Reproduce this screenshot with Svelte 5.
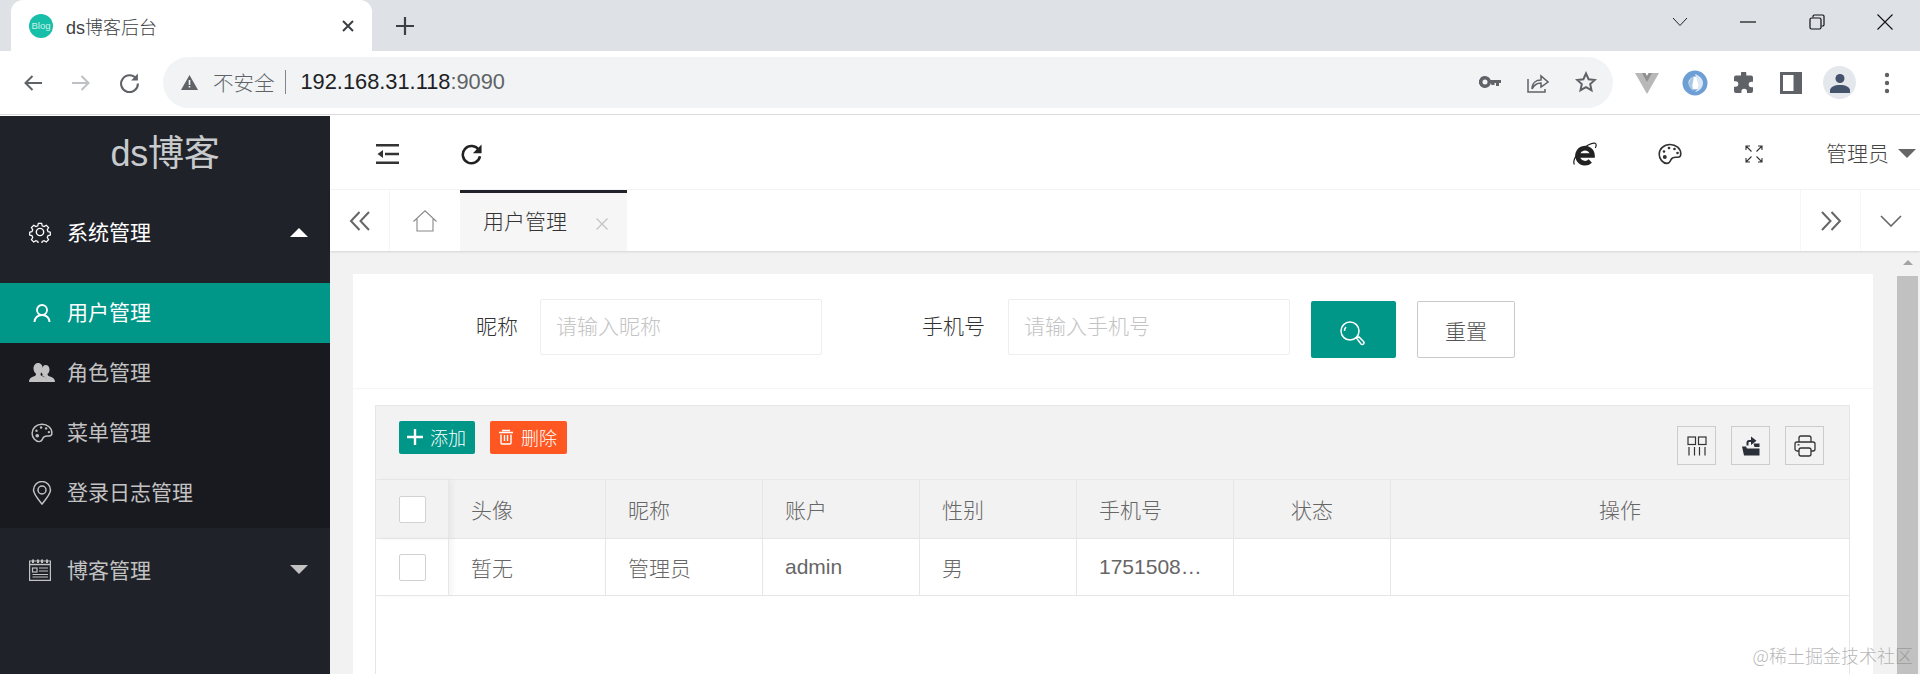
<script lang="ts">
	const subMenu = [
		{ label: '用户管理', icon: 'user', active: true },
		{ label: '角色管理', icon: 'users', active: false },
		{ label: '菜单管理', icon: 'palette', active: false },
		{ label: '登录日志管理', icon: 'pin', active: false }
	];
	const columns = ['头像', '昵称', '账户', '性别', '手机号', '状态', '操作'];
	const row = ['暂无', '管理员', 'admin', '男', '1751508…', '', ''];
</script>

{#snippet palette(size)}
	<svg width={size} height={size} viewBox="0 0 24 24" fill="none" stroke="currentColor" stroke-width="1.6">
		<path d="M12 2.500C5.800 2.500 1.200 6.800 1.200 12.200c0 4.900 3.800 9.200 7.600 9.200 3 0 3.400-2 4.200-3.800.9-2 2.400-2.300 4.600-2.300h2.200c2 0 3-1.300 3-3.300C22.800 6.600 18 2.500 12 2.500z" />
		<g fill="currentColor" stroke="none">
			<circle cx="6" cy="9.500" r="1.300" /><circle cx="11" cy="6" r="1.300" /><circle cx="16.500" cy="7" r="1.300" /><circle cx="19.500" cy="11" r="1.300" /><circle cx="6.800" cy="15" r="2" />
		</g>
	</svg>
{/snippet}

{#snippet caret(up, color)}
	<span class="caret" class:up style="--c:{color}"></span>
{/snippet}

<div class="browser">
	<div class="tabstrip">
		<div class="tab">
			<span class="favicon">Blog</span>
			<span class="tab-title">ds博客后台</span>
			<svg class="tab-close" width="14" height="14" viewBox="0 0 14 14" stroke="#3c4043" stroke-width="2"><path d="M2 2l10 10M12 2L2 12" /></svg>
		</div>
		<svg class="new-tab" width="18" height="18" viewBox="0 0 18 18" stroke="#3c4043" stroke-width="2.200"><path d="M9 0v18M0 9h18" /></svg>
		<div class="win-controls">
			<svg width="16" height="10" viewBox="0 0 16 10" fill="none" stroke="#222"><path d="M1 1l7 7.500L15 1" /></svg>
			<svg width="16" height="4" viewBox="0 0 16 4" stroke="#111" stroke-width="1.200"><path d="M0 2h16" /></svg>
			<svg width="16" height="16" viewBox="0 0 16 16" fill="none" stroke="#111" stroke-width="1.200"><rect x="1" y="4" width="11" height="11" rx="1.500" /><path d="M4 3.500V2.300C4 1.500 4.500 1 5.300 1h8.400C14.500 1 15 1.500 15 2.300v8.400c0 .8-.5 1.300-1.300 1.300h-1.200" /></svg>
			<svg width="16" height="16" viewBox="0 0 16 16" stroke="#111" stroke-width="1.100"><path d="M.5.500l15 15M15.500.500l-15 15" /></svg>
		</div>
	</div>
	<div class="toolbar">
		<div class="nav-btns">
			<svg width="20" height="18" viewBox="0 0 20 18" fill="none" stroke="#5f6368" stroke-width="2"><path d="M19 9H3M9.500 2L2.500 9l7 7" /></svg>
			<svg width="20" height="18" viewBox="0 0 20 18" fill="none" stroke="#bdc1c6" stroke-width="2"><path d="M1 9h16M10.500 2l7 7-7 7" /></svg>
			<svg width="21" height="21" viewBox="0 0 20 20" fill="none" stroke="#5f6368" stroke-width="2"><path d="M16.500 6.500A8 8 0 1 0 18 11" /><path d="M18 1.500V8h-6.500z" fill="#5f6368" stroke="none" /></svg>
		</div>
		<div class="omnibox">
			<svg width="17" height="15" viewBox="0 0 17 15"><path d="M8.500 0L17 15H0z" fill="#5f6368" /><path d="M7.700 5h1.600v5H7.700zM7.700 11h1.600v1.600H7.700z" fill="#f1f3f4" /></svg>
			<span class="insecure">不安全</span>
			<span class="sep"></span>
			<span class="url">192.168.31.118<span class="port">:9090</span></span>
			<span class="omni-icons">
				<svg width="22" height="12" viewBox="0 0 22 12" fill="#5f6368"><path d="M6 0a6 6 0 1 1-5.700 8H0V4h.3A6 6 0 0 1 6 0zm0 3.500a2.500 2.500 0 1 0 0 5 2.500 2.500 0 0 0 0-5zM11 4h11v3h-2v3h-3V7h-1.500v2h-3z" /></svg>
				<svg width="22" height="22" viewBox="0 0 22 22" fill="none" stroke="#5f6368" stroke-width="1.500"><path d="M1 8v13h17v-3" /><path d="M5 18c0-6 4-9 9-9V5l7 6-7 5v-4c-4 0-7 2-9 6z" /></svg>
				<svg width="22" height="22" viewBox="0 0 22 22" fill="none" stroke="#5f6368" stroke-width="2"><path d="M11 2.500l2.600 5.700 6.200.7-4.600 4.200 1.300 6.100-5.500-3.100-5.500 3.100 1.300-6.100-4.600-4.200 6.200-.7z" /></svg>
			</span>
		</div>
		<div class="ext-icons">
			<svg width="24" height="22" viewBox="0 0 24 22"><path d="M0 1h7.500L12 9l4.500-8H24L12 22z" fill="#b8b8b8" /><path d="M7 1h3.500L12 4l1.500-3H17l-5 9z" fill="#8f8f8f" /></svg>
			<svg class="ext-blue" width="26" height="26" viewBox="0 0 26 26" fill="none"><circle cx="13" cy="13" r="9.500" stroke="#6e9fd4" stroke-width="6" /><path d="M13 4c5 2 8 5 8 9s-3 8-8 9c3-3 4-6 3-9s-2-6-3-9z" fill="#dbe8f5" /><path d="M12 6c-4 2-5 5-5 8 0 3 2 6 5 7-2-3-2-6-1-9z" fill="#a9c8e6" /></svg>
			<svg width="22" height="22" viewBox="0 0 22 22" fill="#5f6368"><path d="M8 1a2.700 2.700 0 0 1 5.300 0v2.500H18a2 2 0 0 1 2 2v4.200h-1.500a2.800 2.800 0 1 0 0 5.600H20V19a2 2 0 0 1-2 2h-4v-1.500a2.800 2.800 0 1 0-5.600 0V21H3a2 2 0 0 1-2-2v-4.200h1.500a2.800 2.800 0 1 0 0-5.600H1V5.500a2 2 0 0 1 2-2h5z" /></svg>
			<svg width="22" height="22" viewBox="0 0 22 22"><rect width="22" height="22" fill="#5f6368" /><rect x="3" y="3" width="10.500" height="16" fill="#fff" /></svg>
			<span class="avatar">
				<svg width="20" height="20" viewBox="0 0 20 20" fill="#45526c"><circle cx="10" cy="5.500" r="4.500" /><path d="M0 20v-2.500C0 14 4.500 12 10 12s10 2 10 5.500V20z" /></svg>
			</span>
			<svg class="kebab" width="6" height="22" viewBox="0 0 6 22" fill="#5f6368"><circle cx="3" cy="3" r="2.200" /><circle cx="3" cy="11" r="2.200" /><circle cx="3" cy="19" r="2.200" /></svg>
		</div>
	</div>

	<div class="app">
		<aside class="sidebar">
			<div class="logo">ds博客</div>
			<div class="menu-head open">
				<svg class="menu-icon" width="22" height="22" viewBox="0 0 24 24" fill="none" stroke="currentColor" stroke-width="1.500"><circle cx="12" cy="12" r="4" /><path d="M10 1.500h4l.7 3 2.300 1 2.600-1.600 2.800 2.800-1.600 2.600 1 2.300 2.700.7v3.400l-2.700.7-1 2.300 1.600 2.600-2.800 2.800-2.600-1.600-2.300 1-.7 2.900h-4l-.7-2.900-2.300-1-2.600 1.600-2.800-2.800 1.600-2.600-1-2.300-2.700-.7v-3.400l2.700-.7 1-2.300-1.600-2.600 2.800-2.800 2.600 1.600 2.300-1z" transform="translate(1.200 1.200) scale(.9)" /></svg>
				<span>系统管理</span>
				{@render caret(true, '#fff')}
			</div>
			<ul class="sub">
				{#each subMenu as item}
					<li class:active={item.active}>
						<span class="menu-icon">
							{#if item.icon === 'user'}
								<svg width="20" height="20" viewBox="0 0 20 20" fill="none" stroke="currentColor" stroke-width="1.900"><circle cx="10" cy="7" r="5" /><path d="M2.500 19c0-4 3-7 7.500-7s7.500 3 7.500 7" /></svg>
							{:else if item.icon === 'users'}
								<svg width="26" height="22" viewBox="0 0 26 22" fill="currentColor"><path d="M16.500 3c2.500 0 4 2 4 4.500 0 2-.8 3.500-2 4.500 0 1.500 1 2 3 2.700 2.500.9 4.500 2 4.500 5.300h-8c0-3-1.500-5-5-6.500 1-.8.5-1.500-.5-3 0-.8.5-7.500 4-7.500z" /><path d="M9 1c3 0 4.800 2.500 4.800 5.500 0 2.300-.8 4-2.300 5.200 0 1.800 1 2.300 3.300 3.100 2.200.8 3.700 2.500 3.700 5.200H0c0-3 1.600-4.400 3.800-5.200 2.300-.8 3.200-1.300 3.200-3.100C5.500 10.500 4.500 8.800 4.500 6.500 4.500 3.500 6.200 1 9 1z" /></svg>
							{:else if item.icon === 'palette'}
								{@render palette(22)}
							{:else}
								<svg width="20" height="24" viewBox="0 0 20 24" fill="none" stroke="currentColor" stroke-width="1.500"><path d="M10 23C5 17 1.500 13 1.500 9a8.500 8.500 0 0 1 17 0c0 4-3.500 8-8.500 14z" /><circle cx="10" cy="9" r="4" /></svg>
							{/if}
						</span>
						<span class="sub-label">{item.label}</span>
					</li>
				{/each}
			</ul>
			<div class="menu-head">
				<svg class="menu-icon" width="22" height="22" viewBox="0 0 22 22" fill="none" stroke="currentColor" stroke-width="1.200"><path d="M.6 2h20.800v19.400H.6z" /><path d="M4 .5v3.500M9 .5v3.500M13 .5v3.500M18 .5v3.500" stroke-width="2" /><path d="M1 5.500h20" stroke-width="1.500" /><rect x="3.500" y="9" width="4.500" height="4" /><path d="M10 9h9M10 12h9M3.500 15.500H19M3.500 18H19" /></svg>
				<span>博客管理</span>
				{@render caret(false, '#c2c2c2')}
			</div>
		</aside>

		<main class="main">
			<header class="topbar">
				<div class="topbar-left">
					<svg width="23" height="20" viewBox="0 0 23 20" fill="#333"><path d="M0 0h23v2.600H0zM9 8.700h14v2.600H9zM0 17.400h23V20H0zM7 6v8l-5.500-4z" /></svg>
					<svg width="21" height="21" viewBox="0 0 23 23" fill="none" stroke="#222" stroke-width="2.800"><path d="M19.500 6.500a9.500 9.500 0 1 0 1.300 7" /><path d="M22.500 .5v9.500H13z" fill="#222" stroke="none" /></svg>
				</div>
				<div class="topbar-right">
					<svg width="24" height="24" viewBox="0 0 24 24" fill="none" stroke="#222"><path d="M1.500 22.500C-.5 20 2 14 6.500 9.500 12 4 19 .5 22 1.200c1.500.5 1.500 2.500.3 4.800" stroke-width="1.200" /><path d="M5 13.500h14.500a7.500 7.500 0 1 0-2.200 5.500" stroke-width="4.600" /></svg>
					<span class="palette-top">{@render palette(24)}</span>
					<svg class="full" width="18" height="18" viewBox="0 0 18 18" fill="none" stroke="#333" stroke-width="1.100"><path d="M6.500 6.500L1 1M1 5V1h4M11.500 6.500L17 1M13 1h4v4M6.500 11.500L1 17M1 13v4h4M11.500 11.500L17 17M13 17h4v-4" /></svg>
					<span class="admin"><span class="admin-name">管理员</span>{@render caret(false, '#666')}</span>
				</div>
			</header>
			<nav class="tabs">
				<span class="tabs-btn">
					<svg width="22" height="20" viewBox="0 0 22 20" fill="none" stroke="#666" stroke-width="2"><path d="M10.500 1L2 10l8.500 9M20 1l-8.500 9 8.500 9" /></svg>
				</span>
				<span class="tabs-btn home">
					<svg width="24" height="22" viewBox="0 0 24 22" fill="none" stroke="#888" stroke-width="1.100"><path d="M.5 11.500L12 .8l11.500 10.700M4 9v12h16V9" /></svg>
				</span>
				<span class="page-tab"><span class="page-tab-label">用户管理</span>
					<svg width="12" height="12" viewBox="0 0 12 12" stroke="#c2c2c2" stroke-width="1.200"><path d="M.5.500l11 11M11.500.500l-11 11" /></svg>
				</span>
				<span class="grow"></span>
				<span class="tabs-btn">
					<svg width="22" height="20" viewBox="0 0 22 20" fill="none" stroke="#666" stroke-width="2"><path d="M2 1l8.500 9L2 19M11.500 1L20 10l-8.500 9" /></svg>
				</span>
				<span class="tabs-btn down">
					<svg width="22" height="12" viewBox="0 0 22 12" fill="none" stroke="#666" stroke-width="1.600"><path d="M1 1l10 10L21 1" /></svg>
				</span>
			</nav>
			<div class="body">
				<div class="content">
					<section class="card">
						<form class="search" onsubmit={(e) => e.preventDefault()}>
							<label class="lb1" for="nick">昵称</label>
							<input id="nick" placeholder="请输入昵称" />
							<label class="lb2" for="phone">手机号</label>
							<input id="phone" placeholder="请输入手机号" />
							<button class="btn-search" type="submit" aria-label="搜索">
								<svg width="26" height="26" viewBox="0 0 26 26" fill="none" stroke="currentColor" stroke-width="1.500"><circle cx="11" cy="11" r="9" /><path d="M5.500 11a6 6 0 0 1 1.500-4" /><path d="M17.500 18l2.500-1 4.500 4.500a1.500 1.500 0 0 1-2.500 2.500z" /></svg>
							</button>
							<button class="btn-reset" type="button">重置</button>
						</form>
						<div class="table-box">
							<div class="table-tools">
								<button class="mini teal" type="button">
									<svg width="16" height="16" viewBox="0 0 16 16" fill="#fff"><path d="M6.800 0h2.400v6.800H16v2.400H9.200V16H6.800V9.200H0V6.800h6.800z" /></svg>添加
								</button>
								<button class="mini orange" type="button">
									<svg width="16" height="16" viewBox="0 0 16 16" fill="none" stroke="#fff" stroke-width="1.400"><path d="M1 3.500h14M4 1.500h8M3 5.500v8.500a1 1 0 0 0 1 1h8a1 1 0 0 0 1-1V5.500M6.500 6v6M9.500 6v6" /></svg>删除
								</button>
								<span class="grow"></span>
								<span class="tool">
									<svg width="20" height="20" viewBox="0 0 20 20" fill="none" stroke="#333" stroke-width="1.200"><rect x="1" y="1" width="7.500" height="7.500" /><rect x="11.500" y="1" width="7.500" height="7.500" /><path d="M2 11v8.500M7.500 11v8.500M12.500 11v8.500M18 11v8.500" /></svg>
								</span>
								<span class="tool">
									<svg width="20" height="20" viewBox="0 0 20 20" fill="#2b2f38"><path d="M5.500 9.500V6.500C5.500 5 6.500 4 8 4H10V0.500L15.500 4.800 10 9V6H8.500C8 6 7.500 6.400 7.500 7V9.500z" /><path d="M12.500 7.500H18.500V11H13.500z" /><path d="M1 10.500h4l1 2h12.500V19.500H3z" /></svg>
								</span>
								<span class="tool">
									<svg width="22" height="22" viewBox="0 0 22 22" fill="none" stroke="#333" stroke-width="1.300"><path d="M5 7V3a2 2 0 0 1 2-2h8a2 2 0 0 1 2 2v4" /><path d="M5 16H3a2 2 0 0 1-2-2V9a2 2 0 0 1 2-2h16a2 2 0 0 1 2 2v5a2 2 0 0 1-2 2h-2" /><rect x="5" y="13" width="12" height="8" rx="2" /><path d="M3.500 9.800h2" /></svg>
								</span>
							</div>
							<table>
								<thead>
									<tr>
										<th class="check"><span class="box"></span></th>
										{#each columns as col, i}
											<th class:center={i >= 5}>{col}</th>
										{/each}
									</tr>
								</thead>
								<tbody>
									<tr>
										<td class="check"><span class="box"></span></td>
										{#each row as cell}
											<td>{cell}</td>
										{/each}
									</tr>
								</tbody>
							</table>
						</div>
					</section>
				</div>
				<div class="scrollbar">
					<span class="scroll-up"></span>
					<span class="thumb"></span>
				</div>
			</div>
		</main>
	</div>
	<span class="watermark">@稀土掘金技术社区</span>
</div>

<style>
	:global(body) {
		margin: 0;
		overflow: hidden;
	}

	.browser {
		position: relative;
		width: 1920px;
		height: 674px;
		overflow: hidden;
		font-family: 'Liberation Sans', 'Noto Sans CJK SC', sans-serif;
		font-weight: 300;
		background: #fff;
		display: flex;
		flex-direction: column;
	}

	/* chrome */
	.tabstrip {
		height: 51px;
		flex-shrink: 0;
		background: #dee1e6;
		display: flex;
		align-items: center;
		padding-left: 11px;
	}
	.tab {
		width: 361px;
		height: 51px;
		box-sizing: border-box;
		background: #fff;
		border-radius: 12px 12px 0 0;
		display: flex;
		align-items: center;
		padding: 0 17px 0 18px;
		flex-shrink: 0;
	}
	.favicon {
		width: 24px;
		height: 24px;
		border-radius: 50%;
		background: #17bfa9;
		color: #cdf3ec;
		font-size: 9.5px;
		line-height: 24px;
		text-align: center;
		flex-shrink: 0;
	}
	.tab-title {
		margin-left: 13px;
		font-size: 18px;
		color: #3c4043;
		flex: 1;
	}
	.new-tab {
		margin-left: 24px;
	}
	.win-controls {
		margin-left: auto;
		width: 260px;
		display: flex;
		align-items: center;
		justify-content: space-between;
		padding: 0 27px 7px 12px;
		box-sizing: border-box;
	}
	.toolbar {
		height: 64px;
		flex-shrink: 0;
		box-sizing: border-box;
		background: #fff;
		border-bottom: 1px solid #dadce0;
		display: flex;
		align-items: center;
		padding-left: 23px;
	}
	.nav-btns {
		display: flex;
		align-items: center;
		gap: 28px;
		width: 140px;
		flex-shrink: 0;
	}
	.omnibox {
		width: 1450px;
		height: 51px;
		margin-top: -1px;
		box-sizing: border-box;
		background: #f1f3f4;
		border-radius: 26px;
		display: flex;
		align-items: center;
		padding: 0 16px 0 18px;
		flex-shrink: 0;
	}
	.insecure {
		margin-left: 15px;
		font-size: 20.5px;
		color: #5f6368;
	}
	.sep {
		width: 1px;
		height: 24px;
		background: #80868b;
		margin: 0 15px 0 10px;
	}
	.url {
		font-size: 21.8px;
		color: #202124;
		font-family: 'Liberation Sans', sans-serif;
	}
	.port {
		color: #5f6368;
	}
	.omni-icons {
		margin-left: auto;
		display: flex;
		align-items: center;
		gap: 26px;
	}
	.ext-icons {
		display: flex;
		align-items: center;
		margin-left: 22px;
		gap: 25px;
	}
	.ext-blue {
		margin-left: -2px;
	}
	.avatar {
		width: 33px;
		height: 33px;
		margin-left: -4px;
		border-radius: 50%;
		background: #e4e7eb;
		display: flex;
		align-items: center;
		justify-content: center;
	}
	.kebab {
		margin-left: 3px;
	}

	/* page */
	.app {
		flex: 1;
		display: flex;
		min-height: 0;
		margin-top: 1px;
	}
	.sidebar {
		width: 330px;
		flex-shrink: 0;
		background: #20222a;
		color: #c2c2c2;
		font-size: 21px;
		font-weight: 400;
	}
	.logo {
		height: 73px;
		line-height: 75px;
		text-align: center;
		font-size: 36px;
		color: #c8cacc;
		letter-spacing: -0.3px;
	}
	.menu-head {
		height: 83px;
		display: flex;
		align-items: center;
		padding: 0 22px 0 29px;
		box-sizing: border-box;
	}
	.menu-head span:not(.caret) {
		margin-top: -2px;
	}
	.menu-head.open {
		height: 94px;
		padding-bottom: 8px;
		color: #fff;
	}
	.menu-head .menu-icon {
		margin-right: 16px;
		flex-shrink: 0;
	}
	.caret {
		width: 0;
		height: 0;
		border-left: 9px solid transparent;
		border-right: 9px solid transparent;
		border-top: 9px solid var(--c);
		display: inline-block;
	}
	.caret.up {
		border-top: 0;
		border-bottom: 9px solid var(--c);
	}
	.menu-head .caret {
		margin-left: auto;
	}
	.sub {
		list-style: none;
		margin: 0;
		padding: 0 0 5px;
		background: #191a20;
	}
	.sub li {
		height: 60px;
		display: flex;
		align-items: center;
		padding-left: 29px;
	}
	.sub li.active {
		background: #009688;
		color: #fff;
	}
	.sub .menu-icon {
		width: 26px;
		margin-right: 12px;
		display: flex;
		justify-content: center;
	}
	.sub-label {
		margin-top: -4px;
	}
	.main {
		flex: 1;
		min-width: 0;
		display: flex;
		flex-direction: column;
	}
	.topbar {
		height: 74px;
		flex-shrink: 0;
		box-sizing: border-box;
		border-bottom: 1px solid #f6f6f6;
		display: flex;
		align-items: center;
		padding: 3px 4px 0 46px;
	}
	.topbar-left {
		display: flex;
		align-items: center;
		gap: 62px;
	}
	.topbar-right {
		margin-left: auto;
		display: flex;
		align-items: center;
	}
	.palette-top {
		margin-left: 61px;
		display: flex;
		color: #333;
	}
	.full {
		margin-left: 63px;
	}
	.admin {
		margin-left: 63px;
		font-size: 21px;
		color: #444;
		display: flex;
		align-items: center;
		gap: 9px;
	}
	.admin-name {
		margin-top: -5px;
	}
	.admin .caret {
		margin-top: -2px;
	}
	.tabs {
		height: 61px;
		flex-shrink: 0;
		box-sizing: border-box;
		display: flex;
		box-shadow: 0 1px 2px rgba(0, 0, 0, 0.12);
		position: relative;
		background: #fff;
	}
	.tabs-btn {
		width: 60px;
		display: flex;
		align-items: center;
		justify-content: center;
		border-right: 1px solid #f6f6f6;
		box-sizing: border-box;
	}
	.tabs-btn.home {
		width: 70px;
		border-right: 0;
	}
	.tabs-btn.down {
		border: 0;
		border-left: 1px solid #f6f6f6;
	}
	.grow {
		flex: 1;
	}
	.tabs > .tabs-btn:nth-last-child(2) {
		border-right: 0;
		border-left: 1px solid #f6f6f6;
	}
	.page-tab {
		width: 167px;
		box-sizing: border-box;
		background: #f6f6f6;
		border-top: 3px solid #20222a;
		display: flex;
		align-items: center;
		padding-left: 23px;
		font-size: 21px;
		color: #333;
		gap: 29px;
	}
	.page-tab-label {
		margin-top: -5px;
	}
	.page-tab svg {
		margin-top: 3px;
	}
	.body {
		flex: 1;
		min-height: 0;
		display: flex;
		background: #f2f2f2;
	}
	.content {
		flex: 1;
		min-width: 0;
		padding: 23px 24px 0 23px;
	}
	.card {
		background: #fff;
		height: 600px;
		padding: 0 23px 0 22px;
		box-sizing: border-box;
	}
	.search {
		height: 115px;
		margin: 0 -23px 0 -22px;
		box-sizing: border-box;
		border-bottom: 1px solid #f6f6f6;
		display: flex;
		align-items: flex-start;
		padding-top: 25px;
		font-size: 21px;
		color: #333;
	}
	.search label {
		line-height: 56px;
		flex-shrink: 0;
	}
	.lb1 {
		margin-left: 123px;
		margin-right: 22px;
	}
	.lb2 {
		margin-left: 100px;
		margin-right: 23px;
	}
	.search input {
		width: 282px;
		height: 56px;
		box-sizing: border-box;
		border: 1px solid #eee;
		border-radius: 2px;
		padding: 0 15px;
		font: inherit;
		outline: 0;
	}
	.search input::placeholder {
		color: #c4c4c4;
	}
	.btn-search {
		width: 85px;
		height: 57px;
		margin: 2px 0 0 21px;
		background: #009688;
		color: #fff;
		border: 0;
		border-radius: 2px;
		display: flex;
		align-items: center;
		justify-content: center;
		padding: 6px 4px 0 0;
	}
	.btn-reset {
		width: 98px;
		height: 57px;
		margin: 2px 0 0 21px;
		background: #fff;
		border: 1px solid #c9c9c9;
		border-radius: 2px;
		font: inherit;
		color: #555;
	}
	.table-box {
		margin-top: 16px;
		border: 1px solid #e6e6e6;
		height: 400px;
	}
	.table-tools {
		height: 74px;
		box-sizing: border-box;
		background: #f2f2f2;
		border-bottom: 1px solid #e9e9e9;
		display: flex;
		align-items: flex-start;
		padding: 15px 25px 0 23px;
	}
	.mini {
		height: 33px;
		padding: 0 5px 2px 8px;
		border: 0;
		border-radius: 2px;
		color: #fff;
		font: inherit;
		font-size: 18px;
		display: flex;
		align-items: center;
		gap: 7px;
		margin-right: 15px;
	}
	.mini.teal {
		width: 76px;
		background: #009688;
	}
	.mini.orange {
		width: 77px;
		background: #ff5722;
	}
	.tool {
		width: 39px;
		height: 39px;
		margin: 5px 0 0 15px;
		box-sizing: border-box;
		border: 1px solid #ccc;
		display: flex;
		align-items: center;
		justify-content: center;
	}
	table {
		width: 100%;
		table-layout: fixed;
		border-collapse: separate;
		border-spacing: 0;
		font-size: 21px;
		color: #666;
	}
	th,
	td {
		box-sizing: border-box;
		border-right: 1px solid #e6e6e6;
		border-bottom: 1px solid #e6e6e6;
		font-weight: 300;
		text-align: left;
		padding: 0 22px;
		white-space: nowrap;
		overflow: hidden;
	}
	th {
		height: 59px;
		background: #f2f2f2;
		width: 157px;
	}
	td {
		height: 57px;
	}
	tr > :last-child {
		width: auto;
		border-right: 0;
	}
	th.check,
	td.check {
		width: 73px;
		padding: 0;
		text-align: center;
		position: relative;
		overflow: visible;
		box-shadow: 4px 0 5px rgba(0, 0, 0, 0.04);
	}
	.center {
		text-align: center;
	}
	.box {
		display: block;
		width: 27px;
		height: 27px;
		margin: 0 auto;
		box-sizing: border-box;
		background: #fff;
		border: 1px solid #d2d2d2;
		border-radius: 2px;
	}
	.scrollbar {
		width: 23px;
		flex-shrink: 0;
		box-sizing: border-box;
		padding-right: 2px;
		display: flex;
		flex-direction: column;
		align-items: center;
	}
	.scroll-up {
		width: 0;
		height: 0;
		margin-top: 9px;
		border-left: 5px solid transparent;
		border-right: 5px solid transparent;
		border-bottom: 5px solid #a3a3a3;
	}
	.thumb {
		width: 100%;
		flex: 1;
		margin-top: 11px;
		background: #c1c1c1;
	}
	.watermark {
		position: absolute;
		right: 7px;
		bottom: 6px;
		font-size: 18px;
		color: rgba(120, 120, 120, 0.55);
		font-family: 'Noto Sans CJK SC', sans-serif;
	}
</style>
